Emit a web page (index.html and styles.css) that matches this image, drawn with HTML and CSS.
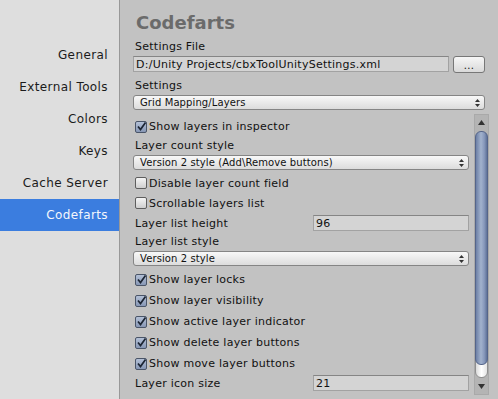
FILE: index.html
```html
<!doctype html>
<html lang="en">
  <head>
    <meta charset="UTF-8" />
    <title>Preferences - Codefarts</title>
    <link rel="stylesheet" href="styles.css">
  </head>
  <body>
    <div class="window">
      <div class="sidebar">
        <div class="nav-item">General</div>
        <div class="nav-item">External Tools</div>
        <div class="nav-item">Colors</div>
        <div class="nav-item">Keys</div>
        <div class="nav-item">Cache Server</div>
        <div class="nav-item selected">Codefarts</div>
      </div>

      <div class="main">
        <h1 class="title">Codefarts</h1>

        <div class="label">Settings File</div>
        <div class="file-row">
          <div class="field wide">D:/Unity Projects/cbxToolUnitySettings.xml</div>
          <div class="button">...</div>
        </div>

        <div class="label gap">Settings</div>
        <div class="popup">
          <span>Grid Mapping/Layers</span>
          <svg class="popup-arrows" width="5" height="8" viewBox="0 0 5 8"><path d="M0 3 L2.5 0 L5 3 Z M0 5 L2.5 8 L5 5 Z" fill="#333"/></svg>
        </div>

        <div class="scroll-area">
          <div class="scroll-content">
            <div class="toggle">
              <div class="checkbox checked"><svg width="11" height="11" viewBox="0 0 11 11"><path d="M2 5.5 L4.5 8.5 L9.5 1.5" fill="none" stroke="#1c2533" stroke-width="1.7"/></svg></div>
              <span>Show layers in inspector</span>
            </div>

            <div class="label">Layer count style</div>
            <div class="popup">
              <span>Version 2 style (Add\Remove buttons)</span>
              <svg class="popup-arrows" width="5" height="8" viewBox="0 0 5 8"><path d="M0 3 L2.5 0 L5 3 Z M0 5 L2.5 8 L5 5 Z" fill="#333"/></svg>
            </div>

            <div class="toggle short first">
              <div class="checkbox"></div>
              <span>Disable layer count field</span>
            </div>
            <div class="toggle short">
              <div class="checkbox"></div>
              <span>Scrollable layers list</span>
            </div>

            <div class="prop-row">
              <span class="prop-name">Layer list height</span>
              <div class="field number">96</div>
            </div>

            <div class="label">Layer list style</div>
            <div class="popup">
              <span>Version 2 style</span>
              <svg class="popup-arrows" width="5" height="8" viewBox="0 0 5 8"><path d="M0 3 L2.5 0 L5 3 Z M0 5 L2.5 8 L5 5 Z" fill="#333"/></svg>
            </div>

            <div class="checks">
              <div class="toggle">
                <div class="checkbox checked"><svg width="11" height="11" viewBox="0 0 11 11"><path d="M2 5.5 L4.5 8.5 L9.5 1.5" fill="none" stroke="#1c2533" stroke-width="1.7"/></svg></div>
                <span>Show layer locks</span>
              </div>
              <div class="toggle">
                <div class="checkbox checked"><svg width="11" height="11" viewBox="0 0 11 11"><path d="M2 5.5 L4.5 8.5 L9.5 1.5" fill="none" stroke="#1c2533" stroke-width="1.7"/></svg></div>
                <span>Show layer visibility</span>
              </div>
              <div class="toggle">
                <div class="checkbox checked"><svg width="11" height="11" viewBox="0 0 11 11"><path d="M2 5.5 L4.5 8.5 L9.5 1.5" fill="none" stroke="#1c2533" stroke-width="1.7"/></svg></div>
                <span>Show active layer indicator</span>
              </div>
              <div class="toggle">
                <div class="checkbox checked"><svg width="11" height="11" viewBox="0 0 11 11"><path d="M2 5.5 L4.5 8.5 L9.5 1.5" fill="none" stroke="#1c2533" stroke-width="1.7"/></svg></div>
                <span>Show delete layer buttons</span>
              </div>
              <div class="toggle">
                <div class="checkbox checked"><svg width="11" height="11" viewBox="0 0 11 11"><path d="M2 5.5 L4.5 8.5 L9.5 1.5" fill="none" stroke="#1c2533" stroke-width="1.7"/></svg></div>
                <span>Show move layer buttons</span>
              </div>
            </div>

            <div class="prop-row icon-size">
              <span class="prop-name">Layer icon size</span>
              <div class="field number">21</div>
            </div>
          </div>

          <div class="scrollbar">
            <div class="arrow">
              <svg width="7" height="5" viewBox="0 0 7 5"><path d="M0 5 L3.5 0 L7 5 Z" fill="#333"/></svg>
            </div>
            <div class="thumb">
              <div class="thumb-body"></div>
              <div class="thumb-cap"></div>
            </div>
            <div class="arrow">
              <svg width="7" height="5" viewBox="0 0 7 5"><path d="M0 0 L3.5 5 L7 0 Z" fill="#333"/></svg>
            </div>
          </div>
        </div>
      </div>
    </div>
  </body>
</html>
```

FILE: styles.css
```css
html, body {
  margin: 0;
  padding: 0;
}
body {
  font-family: "DejaVu Sans", Verdana, sans-serif;
  font-size: 11px;
  letter-spacing: 0.25px;
  color: #111;
  background: #c2c2c2;
  width: 498px;
  height: 399px;
  overflow: hidden;
}
.window {
  display: flex;
  height: 399px;
}
.sidebar {
  width: 119px;
  flex: none;
  background: #dedede;
  border-right: 1px solid #989898;
  padding-top: 39px;
  box-sizing: content-box;
}
.nav-item {
  height: 32px;
  line-height: 32px;
  text-align: right;
  padding-right: 11px;
  font-size: 12px;
  letter-spacing: 0.4px;
  color: #1b1b1b;
}
.nav-item.selected {
  background: #3b7ddf;
  color: #f4f7fc;
}
.main {
  flex: 1;
  padding: 10px 13px 0 13px;
  display: flex;
  flex-direction: column;
  min-width: 0;
}
.title {
  margin: 0 0 2px 3px;
  font-size: 18px;
  line-height: 26px;
  font-weight: bold;
  letter-spacing: 0;
  color: #6b6b6b;
}
.label {
  height: 18px;
  line-height: 18px;
  padding-left: 2px;
}
.label.gap {
  margin-top: 4px;
}
.file-row {
  display: flex;
  align-items: flex-start;
  gap: 4px;
}
.field {
  height: 16px;
  line-height: 15px;
  box-sizing: border-box;
  background: #d4d4d4;
  border: 1px solid #a2a2a2;
  border-top-color: #858585;
  padding-left: 2px;
  white-space: nowrap;
  overflow: hidden;
}
.field.wide {
  flex: 1;
}
.button {
  width: 32px;
  height: 17px;
  box-sizing: border-box;
  border: 1px solid #777;
  border-radius: 3px;
  background: linear-gradient(#f6f6f6, #d9d9d9);
  text-align: center;
  line-height: 17px;
  font-size: 10px;
}
.popup {
  height: 15px;
  box-sizing: border-box;
  border: 1px solid #858585;
  border-radius: 3px;
  background: linear-gradient(#f8f8f8, #dcdcdc);
  display: flex;
  align-items: center;
  justify-content: space-between;
  padding: 0 4px 0 6px;
  font-size: 10px;
  letter-spacing: 0.1px;
  line-height: 13px;
}
.popup-arrows {
  display: block;
}
.scroll-area {
  display: flex;
  flex: 1;
  margin-top: 4px;
  margin-right: -4px;
  min-height: 0;
}
.scroll-content {
  flex: 1;
  padding-top: 2px;
  min-width: 0;
}
.toggle {
  height: 21px;
  display: flex;
  align-items: center;
  padding-left: 2px;
}
.toggle.short {
  height: 20px;
}
.toggle.first {
  margin-top: 3px;
}
.toggle span {
  margin-left: 2px;
}
.checkbox {
  width: 12px;
  height: 12px;
  box-sizing: border-box;
  border: 1px solid #5e5e5e;
  border-radius: 2px;
  background: linear-gradient(#f5f5f5, #cfcfcf);
  position: relative;
  flex: none;
}
.checkbox.checked {
  background: linear-gradient(#b3c0d6, #8797b5);
  border-color: #4a5568;
}
.checkbox svg {
  position: absolute;
  left: 0;
  top: -1px;
}
.prop-row {
  height: 20px;
  display: flex;
  align-items: center;
  padding-left: 2px;
}
.prop-name {
  width: 178px;
  flex: none;
}
.field.number {
  flex: 1;
  height: 16px;
}
.checks {
  margin-top: 3px;
}
.icon-size {
  height: 18px;
}
.scrollbar {
  width: 15px;
  height: 281px;
  margin-left: 5px;
  box-sizing: border-box;
  background: #b4b4b4;
  border: 1px solid #a9a9a9;
  display: flex;
  flex-direction: column;
  align-items: center;
}
.arrow {
  height: 15px;
  flex: none;
  display: flex;
  align-items: center;
  justify-content: center;
}
.thumb {
  flex: 1;
  width: 13px;
  display: flex;
  flex-direction: column;
  margin: 1px 0;
}
.thumb-body {
  flex: 1;
  border: 1px solid #55658a;
  border-radius: 6px;
  background: linear-gradient(90deg, #6d80a6, #a2b2cd 45%, #8798bb 75%, #5f7298);
  position: relative;
  z-index: 1;
}
.thumb-cap {
  height: 20px;
  margin-top: -9px;
  border: 1px solid #8f8f8f;
  border-radius: 0 0 6px 6px;
  background: linear-gradient(90deg, #dadada, #ffffff 50%, #e4e4e4);
}
```
